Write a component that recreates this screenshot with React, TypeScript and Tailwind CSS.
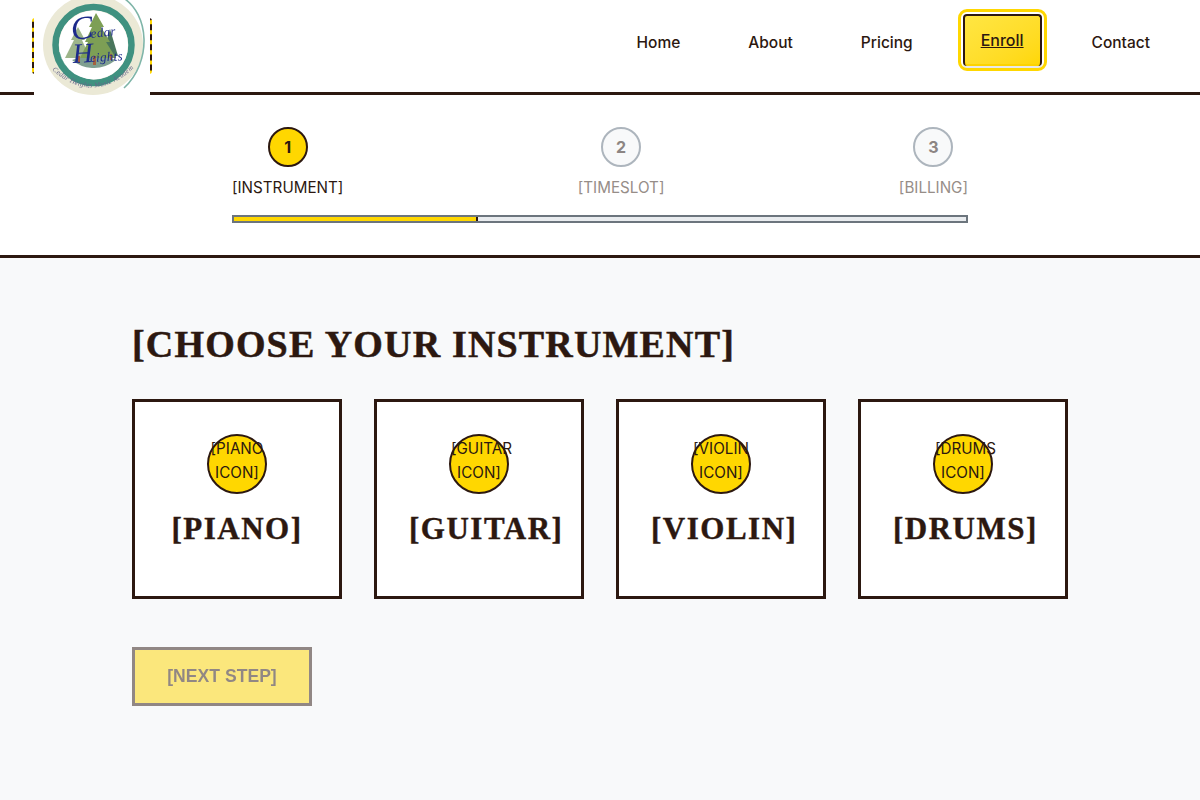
import React from "react";

const scriptFont = "'Liberation Serif',serif";

function Logo() {
  return (
    <svg width="116" height="95" viewBox="34 0 116 95" className="block blur-[0.4px]">
      <circle cx="93" cy="45" r="50" fill="#ebe9d6" />
      <path d="M122 -3 C150 14 152 62 124 88" fill="none" stroke="#7fb5a8" strokeWidth="1.6" />
      <circle cx="93.5" cy="45" r="38" fill="none" stroke="#3f9180" strokeWidth="6.5" />
      <path d="M60 52 Q70 86 110 80" fill="none" stroke="#3f9180" strokeWidth="2" />
      <circle cx="93.5" cy="45" r="34.5" fill="#ffffff" />
      <path d="M72 60 Q94 52 116 60 Q104 69 92 68 Q80 67 72 60Z" fill="#7f9f90" />
      <path d="M110 29 L118 56 L102 56Z" fill="#49755c" />
      <path d="M78 27 L85 40 L82 40 L90 58 L65 58 L74 40 L71 40Z" fill="#9db58a" />
      <path d="M96 13 L104 27 L101 27 L110 42 L106 42 L116 58 L80 58 L88 42 L85 42 L92 27 L89 27Z" fill="#7d9f55" />
      <rect x="93" y="56" width="3" height="9" fill="#a5623e" />
      <rect x="78" y="56" width="2" height="7" fill="#a5623e" />
      <rect x="110" y="54" width="2" height="6" fill="#a5623e" />
      <text x="72" y="38" fontFamily={scriptFont} fontStyle="italic" fill="#1c2a8a" transform="rotate(-6 90 38)">
        <tspan fontSize="33">C</tspan>
        <tspan fontSize="13" dx="-3" letterSpacing="0.4">edar</tspan>
      </text>
      <text x="73" y="62" fontFamily={scriptFont} fontStyle="italic" fill="#1c2a8a" transform="rotate(-3 90 62)">
        <tspan fontSize="28">H</tspan>
        <tspan fontSize="13" dx="-3" letterSpacing="0.3">eights</tspan>
      </text>
      <defs>
        <path id="logo-arc" d="M52 70 Q93 106 134 68" />
      </defs>
      <text fontFamily={scriptFont} fontStyle="italic" fontSize="7" fill="#66668a" letterSpacing="0.3">
        <textPath href="#logo-arc">Cedar Heights Music Academy</textPath>
      </text>
    </svg>
  );
}

function Step({ n, label, active }: { n: number; label: string; active?: boolean }) {
  return (
    <div className="flex flex-col items-center">
      <div
        className={
          active
            ? "flex h-10 w-10 items-center justify-center rounded-full border-2 border-[#2c1810] bg-[#ffd700] font-bold text-[#2c1810]"
            : "flex h-10 w-10 items-center justify-center rounded-full border-2 border-[#adb5bd] bg-[#f8f9fa] font-bold text-[#8c8583]"
        }
      >
        {n}
      </div>
      <span className={active ? "mt-[9px] text-[15.2px] leading-6 text-[#2c1810]" : "mt-[9px] text-[15.2px] leading-6 text-[#968d88]"}>{label}</span>
    </div>
  );
}

function Card({ icon, name }: { icon: string; name: string }) {
  return (
    <div className="h-[200px] w-[210px] border-[3px] border-[#2c1810] bg-white p-8 text-center">
      <div className="mx-auto mb-4 flex h-[60px] w-[60px] items-center justify-center rounded-full border-2 border-[#2c1810] bg-[#ffd700] pb-[6px] text-[15.2px] leading-6">
        <span className="block w-full">{icon}</span>
      </div>
      <h3 className="font-['Liberation_Serif',serif] text-[31px] leading-[38px] font-bold tracking-[1.5px] whitespace-nowrap [-webkit-text-stroke:0.4px_#2c1810]">{name}</h3>
    </div>
  );
}

export default function App() {
  return (
    <div className="min-h-[800px] bg-[#f8f9fa] font-['Inter',sans-serif] text-[#2c1810]">
      <header className="relative flex h-[95px] items-center justify-end border-b-[3px] border-[#2c1810] bg-white pr-[50px] pb-[6px]">
        <div className="absolute top-[18px] left-[32px] h-[56px] w-[120px] rounded-[3px] border-x-2 border-dashed border-x-[#2c1810] bg-[#ffd700]" />
        <div className="absolute top-0 left-[34px] h-[95px] w-[116px] bg-white">
          <Logo />
        </div>
        <nav className="flex items-center text-[15.5px] font-medium">
          <a className="mr-[68px]">Home</a>
          <a className="mr-[68px]">About</a>
          <a className="mr-[50px]">Pricing</a>
          <a className="mr-[50px] -translate-y-[3px] rounded-[4px] border-2 border-b-0 border-[#2c1810] bg-gradient-to-br from-[#ffe642] to-[#ffd700] px-4 pt-3 pb-[14px] text-base leading-6 underline shadow-[inset_0_-2px_0_#fdd300,0_2px_0_#e8e8e8] outline-[3px] outline-offset-2 outline-[#ffd700]">Enroll</a>
          <a>Contact</a>
        </nav>
      </header>

      <section className="border-b-[3px] border-[#2c1810] bg-white pt-8">
        <div className="mx-auto w-[736px]">
          <div className="flex items-start justify-between">
            <Step n={1} label="[INSTRUMENT]" active />
            <Step n={2} label="[TIMESLOT]" />
            <Step n={3} label="[BILLING]" />
          </div>
          <div className="mt-[15px] mb-8 flex h-2 border-2 border-[#6c757d] bg-[#e9ecef]">
            <div className="h-full w-[244px] border-r-2 border-[#2c1810] bg-[#ffd700]" />
          </div>
        </div>
      </section>

      <main className="mx-auto w-[936px] pt-16">
        <h2 className="mb-8 font-['Liberation_Serif',serif] text-[38px] leading-[45px] font-bold tracking-[1.17px] whitespace-nowrap [-webkit-text-stroke:0.5px_#2c1810]">[CHOOSE YOUR INSTRUMENT]</h2>
        <div className="flex gap-8">
          <Card icon="[PIANO ICON]" name="[PIANO]" />
          <Card icon="[GUITAR ICON]" name="[GUITAR]" />
          <Card icon="[VIOLIN ICON]" name="[VIOLIN]" />
          <Card icon="[DRUMS ICON]" name="[DRUMS]" />
        </div>
        <button className="mt-12 h-[59px] w-[180px] border-[3px] border-[#2c1810] bg-[#ffd700] font-['Liberation_Sans',sans-serif] text-[17.6px] font-bold opacity-50">
          [NEXT STEP]
        </button>
      </main>
    </div>
  );
}
